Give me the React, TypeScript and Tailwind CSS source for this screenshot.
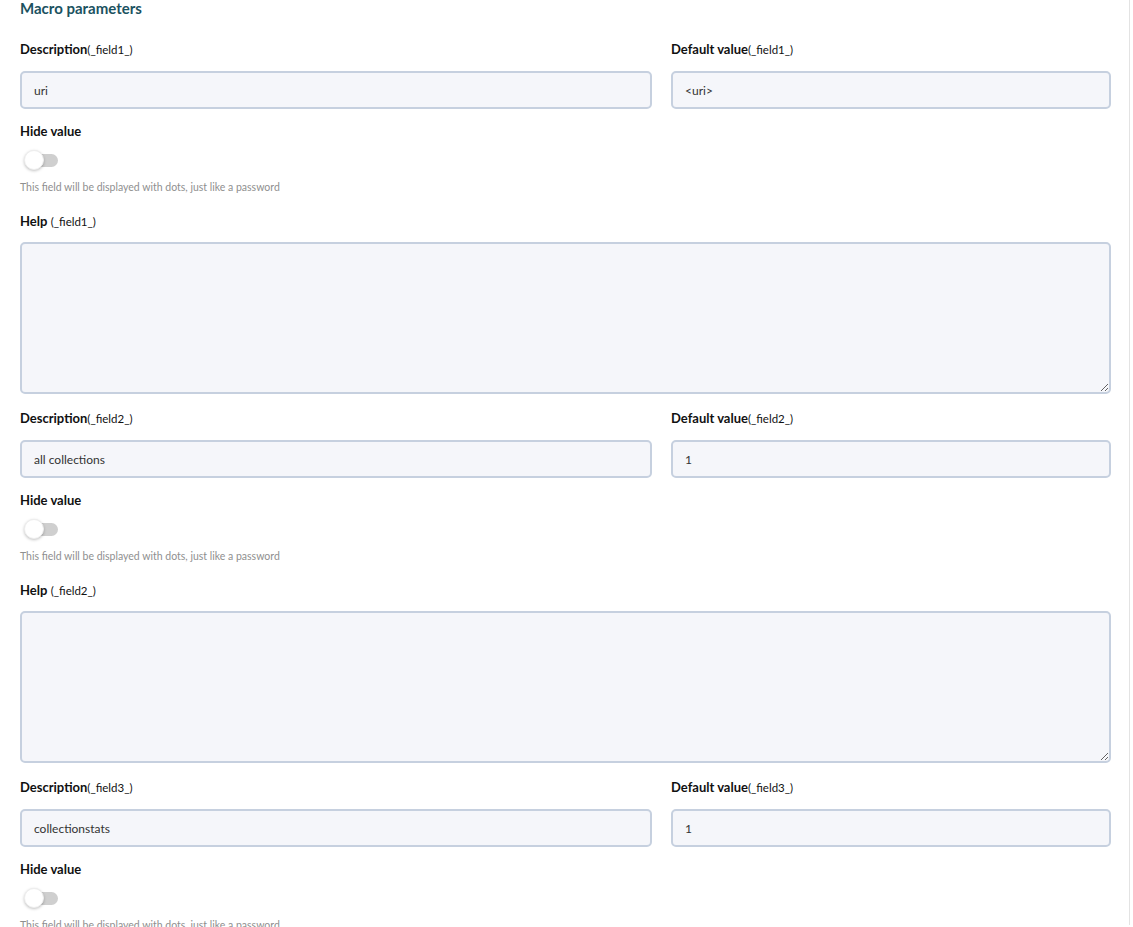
import React from "react";

type Field = { n: number; desc: string; def: string };

const fields: Field[] = [
  { n: 1, desc: "uri", def: "<uri>" },
  { n: 2, desc: "all collections", def: "1" },
  { n: 3, desc: "collectionstats", def: "1" },
];

const inputCls =
  "h-[38px] w-full rounded-[5px] border-2 border-[#c6d0df] bg-[#f5f6fa] px-[12px] text-[12px] text-[#333] outline-none";

function Label({ main, sub, space }: { main: string; sub: string; space?: boolean }) {
  return (
    <div className="h-[20px] leading-[20px] text-[13px] text-[#111]">
      <span className="font-bold">{main}</span>
      {space ? " " : ""}
      <span className="text-[11.5px]">{sub}</span>
    </div>
  );
}

function Toggle() {
  return (
    <div className="relative mt-[9px] h-[20px] w-[40px]">
      <div className="absolute left-[8px] top-[4px] h-[13px] w-[30px] rounded-full bg-[#cfcfcf]" />
      <div className="absolute left-[4px] top-0 h-[20px] w-[20px] rounded-full border border-[#eee] bg-white shadow-[0_1px_3px_rgba(0,0,0,0.25)]" />
    </div>
  );
}

function FieldBlock({ f, first }: { f: Field; first: boolean }) {
  const tag = `(_field${f.n}_)`;
  return (
    <div className={first ? "mt-[21px]" : "mt-[14px]"}>
      <div className="grid grid-cols-[632px_440px] gap-x-[19px]">
        <div>
          <Label main="Description" sub={tag} />
          <input className={`${inputCls} mt-[12px]`} defaultValue={f.desc} />
        </div>
        <div>
          <Label main="Default value" sub={tag} />
          <input className={`${inputCls} mt-[12px]`} defaultValue={f.def} />
        </div>
      </div>
      <div className="mt-[12px] h-[20px] leading-[20px] text-[13px] font-bold text-[#111]">Hide value</div>
      <Toggle />
      <div className="mt-[9px] h-[16px] leading-[16px] text-[10.5px] text-[#8f8f8f]">
        This field will be displayed with dots, just like a password
      </div>
      <div className="mt-[16px]">
        <Label main="Help" sub={tag} space />
      </div>
      <textarea className="mt-[11px] block h-[152px] w-[1091px] rounded-[5px] border-2 border-[#c6d0df] bg-[#f5f6fa] px-[12px] py-[8px] text-[12px] text-[#333] outline-none" />
    </div>
  );
}

export default function App() {
  return (
    <div className="h-[927px] w-[1133px] overflow-hidden bg-white font-['Lato',sans-serif]">
      <div className="h-full w-[1130px] border-r border-[#e3e3e3] pl-[20px]">
        <h2 className="-mt-[2px] h-[20px] leading-[20px] text-[15px] font-bold text-[#1b5260]">Macro parameters</h2>
        {fields.map((f, i) => (
          <FieldBlock key={f.n} f={f} first={i === 0} />
        ))}
      </div>
    </div>
  );
}
